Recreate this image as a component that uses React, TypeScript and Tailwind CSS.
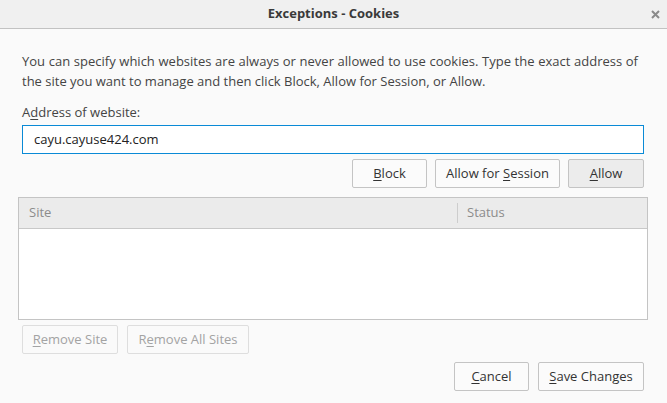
import React from 'react';

const font = { fontFamily: '"Open Sans", "Noto Sans", sans-serif' };

function Btn({
  children,
  className = '',
  disabled = false,
  active = false,
}: {
  children: React.ReactNode;
  className?: string;
  disabled?: boolean;
  active?: boolean;
}) {
  return (
    <button
      disabled={disabled}
      className={`flex h-[29px] items-center justify-center rounded-[2px] border text-[13px] ${
        disabled
          ? 'border-[#dedede] bg-[#fafafa] text-[#a3a3a3]'
          : active
            ? 'border-[#c4c4c4] bg-[#ececec] text-[#333]'
            : 'border-[#c4c4c4] bg-[#fbfbfb] text-[#333]'
      } ${className}`}
    >
      <span>{children}</span>
    </button>
  );
}

function K({ children }: { children: React.ReactNode }) {
  return <span className="underline underline-offset-2">{children}</span>;
}

export default function App() {
  return (
    <div className="h-[403px] w-[667px] overflow-hidden bg-[#fafafa] text-[#3c3c3c]" style={font}>
      {/* Title bar */}
      <div className="relative flex h-[29px] items-center justify-center border-b border-[#c2c2c2] bg-[#f0f0f0]">
        <span className="text-[13px] font-bold text-[#3a3a3a]">Exceptions - Cookies</span>
        <svg className="absolute right-[7px] top-[10px]" width="9" height="9" viewBox="0 0 9 9">
          <path d="M1 1L8 8M8 1L1 8" stroke="#8a8a8a" strokeWidth="2" />
        </svg>
      </div>

      <div className="px-[22px] pt-[22px]">
        <div className="text-[13px] leading-[20px] text-[#444]">
          <p className="w-[616px] text-justify [text-align-last:justify]">
            You can specify which websites are always or never allowed to use cookies. Type the exact address of
          </p>
          <p>the site you want to manage and then click Block, Allow for Session, or Allow.</p>
        </div>

        <div className="mt-[11px] text-[13px] leading-[20px] text-[#444]">
          A<K>d</K>dress of website:
        </div>

        <div className="mt-[3px] flex h-[29px] w-[622px] items-center border border-[#0a8ad6] bg-white px-[11px] text-[13px] text-[#222]">
          cayu.cayuse424.com
        </div>

        <div className="mt-[5px] flex w-[622px] justify-end gap-[8px]">
          <Btn className="w-[75px]">
            <K>B</K>lock
          </Btn>
          <Btn className="w-[125px]">
            Allow for <K>S</K>ession
          </Btn>
          <Btn className="w-[76px]" active>
            <K>A</K>llow
          </Btn>
        </div>
      </div>

      {/* Table */}
      <div className="ml-[18px] mt-[9px] flex h-[123px] w-[630px] flex-col border border-[#c4c4c4] bg-white">
        <div className="flex h-[31px] items-center border-b border-[#c8c8c8] bg-[#ebebeb] text-[13px] text-[#8c8c8c]">
          <div className="w-[438px] pl-[10px]">Site</div>
          <div className="h-[20px] w-px bg-[#cdcdcd]" />
          <div className="pl-[9px]">Status</div>
        </div>
        <div className="flex-1" />
      </div>

      <div className="ml-[22px] mt-[5px] flex gap-[9px]">
        <Btn className="w-[96px]" disabled>
          <K>R</K>emove Site
        </Btn>
        <Btn className="w-[122px]" disabled>
          R<K>e</K>move All Sites
        </Btn>
      </div>

      <div className="mt-[8px] flex w-[644px] justify-end gap-[9px]">
        <Btn className="w-[75px]">
          <K>C</K>ancel
        </Btn>
        <Btn className="w-[106px]">
          <K>S</K>ave Changes
        </Btn>
      </div>
    </div>
  );
}
